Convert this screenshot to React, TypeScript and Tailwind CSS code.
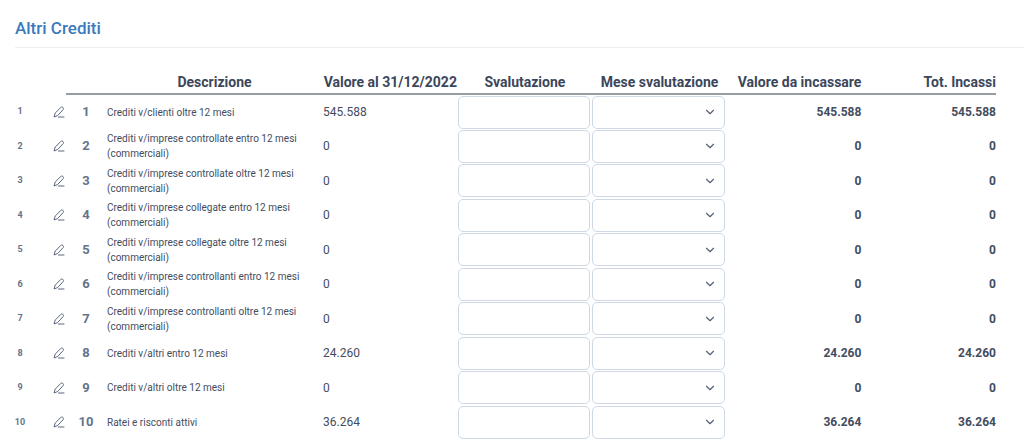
import { ChevronDown } from "lucide-react";

type Credit = {
  id: number;
  description: string;
  value: string;
};

const credits: Credit[] = [
  { id: 1, description: "Crediti v/clienti oltre 12 mesi", value: "545.588" },
  { id: 2, description: "Crediti v/imprese controllate entro 12 mesi (commerciali)", value: "0" },
  { id: 3, description: "Crediti v/imprese controllate oltre 12 mesi (commerciali)", value: "0" },
  { id: 4, description: "Crediti v/imprese collegate entro 12 mesi (commerciali)", value: "0" },
  { id: 5, description: "Crediti v/imprese collegate oltre 12 mesi (commerciali)", value: "0" },
  { id: 6, description: "Crediti v/imprese controllanti entro 12 mesi (commerciali)", value: "0" },
  { id: 7, description: "Crediti v/imprese controllanti oltre 12 mesi (commerciali)", value: "0" },
  { id: 8, description: "Crediti v/altri entro 12 mesi", value: "24.260" },
  { id: 9, description: "Crediti v/altri oltre 12 mesi", value: "0" },
  { id: 10, description: "Ratei e risconti attivi", value: "36.264" },
];

const months = [
  "Gennaio",
  "Febbraio",
  "Marzo",
  "Aprile",
  "Maggio",
  "Giugno",
  "Luglio",
  "Agosto",
  "Settembre",
  "Ottobre",
  "Novembre",
  "Dicembre",
];

const fieldClass =
  "block h-[33px] w-full rounded-[5px] border border-[#ced9e5] bg-white px-3 text-[12px] text-[#475569] outline-none focus:border-blue-400";

function PenIcon() {
  return (
    <svg
      width="12"
      height="12"
      viewBox="0 0 24 24"
      fill="none"
      stroke="currentColor"
      strokeWidth="2"
      strokeLinecap="round"
      strokeLinejoin="round"
    >
      <path d="M15.2 3.2c1.2-1.4 3.2-1.6 4.6-.4 1.4 1.2 1.5 3.2.3 4.6L9.4 19 2 22l2.2-7.2z" />
      <path d="M11 22h11" />
    </svg>
  );
}

function CreditRow({ credit }: { credit: Credit }) {
  return (
    <tr className="odd:h-[35px] even:h-[34px]">
      <td className="pt-px text-center text-[9px] font-bold text-[#64748b]">{credit.id}</td>
      <td>
        <button
          type="button"
          aria-label={`Modifica riga ${credit.id}`}
          className="mr-px ml-auto flex cursor-pointer text-[#5b677b]"
        >
          <PenIcon />
        </button>
      </td>
      <td className="text-center text-[13px] font-bold text-[#64748b]">{credit.id}</td>
      <td className="pl-px pr-4 text-[10px] leading-[15px]">{credit.description}</td>
      <td>{credit.value}</td>
      <td className="pr-[2px]">
        <input
          type="text"
          aria-label={`Svalutazione ${credit.description}`}
          className={fieldClass}
        />
      </td>
      <td className="pr-[2px]">
        <div className="relative">
          <select
            aria-label={`Mese svalutazione ${credit.description}`}
            defaultValue=""
            className={`${fieldClass} appearance-none`}
          >
            <option value=""></option>
            {months.map((month) => (
              <option key={month}>{month}</option>
            ))}
          </select>
          <ChevronDown
            size={14}
            strokeWidth={2}
            className="pointer-events-none absolute inset-y-0 right-2 my-auto text-[#566276]"
          />
        </div>
      </td>
      <td className="text-right font-bold">{credit.value}</td>
      <td className="text-right font-bold">{credit.value}</td>
    </tr>
  );
}

export default function App() {
  return (
    <main className="bg-white font-[Roboto,sans-serif] text-[#434d60]">
      <header className="ml-[15px] border-b border-[#eeeff1] pt-4 pb-[7px]">
        <h1 className="text-[17px] leading-6 font-medium text-[#3a7abd]">Altri Crediti</h1>
      </header>

      <div className="mt-6 pr-7 pb-1">
        <table className="w-full table-fixed border-collapse text-[12px]">
          <colgroup>
            <col className="w-10" />
            <col className="w-[26px]" />
            <col className="w-10" />
            <col className="w-[217px]" />
            <col span={5} />
          </colgroup>
          <thead>
            <tr className="text-[14px] leading-5 text-[#3b465b] [&>th]:pb-px [&>th]:font-bold">
              <td colSpan={2}></td>
              <td className="border-b-2 border-[#989ca5]"></td>
              <th scope="col" className="border-b-2 border-[#989ca5]">Descrizione</th>
              <th scope="col" className="border-b-2 border-[#989ca5] whitespace-nowrap">Valore al 31/12/2022</th>
              <th scope="col" className="border-b-2 border-[#989ca5]">Svalutazione</th>
              <th scope="col" className="border-b-2 border-[#989ca5]">Mese svalutazione</th>
              <th scope="col" className="border-b-2 border-[#989ca5] text-right">Valore da incassare</th>
              <th scope="col" className="border-b-2 border-[#989ca5] text-right">Tot. Incassi</th>
            </tr>
          </thead>
          <tbody>
            {credits.map((credit) => (
              <CreditRow key={credit.id} credit={credit} />
            ))}
          </tbody>
        </table>
      </div>
    </main>
  );
}
